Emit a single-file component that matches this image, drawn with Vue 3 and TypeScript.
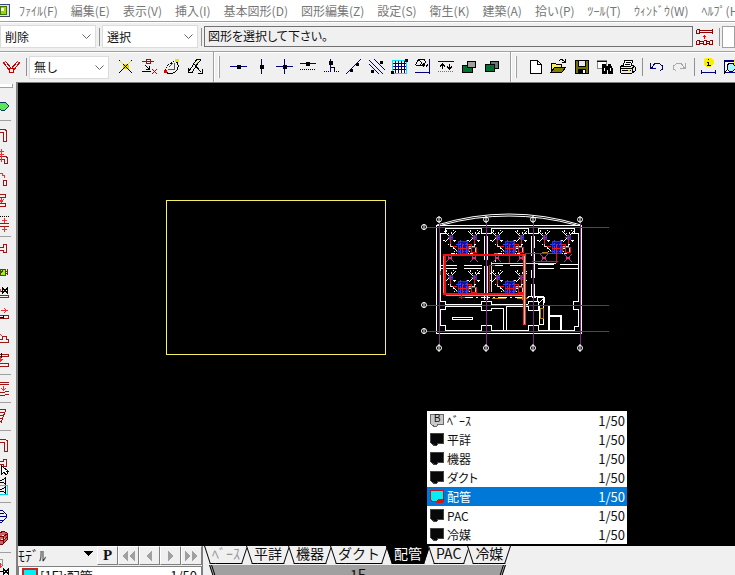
<script setup lang="ts">
import { ref } from 'vue'

type Shape = [d: string, stroke: string, fill?: string, dash?: string]
interface Icon { label: string; shapes: Shape[] }

const K = '#000000'
const R = '#a01414'
const B = '#000080'
const N = 'none'

const menus = [
  'ﾌｧｲﾙ(F)', '編集(E)', '表示(V)', '挿入(I)', '基本図形(D)', '図形編集(Z)', '設定(S)',
  '衛生(K)', '建築(A)', '拾い(P)', 'ﾂｰﾙ(T)', 'ｳｨﾝﾄﾞｳ(W)', 'ﾍﾙﾌﾟ(H)',
]

const branch: Icon = {
  label: '分岐',
  shapes: [
    ['M1.5 4.500L8 13M3.500 3.500L10 11M17.500 4.500L11 13M15.500 3.500L9 11M7.500 10.500H11.500V14.500H7.500Z', '#c00000'],
    ['M1 6L4 3M18 6L15 3', '#ff2020'],
  ],
}

const pipeJoin: Icon = {
  label: '接続',
  shapes: [
    ['M1.5 1.500V5.500M4 2.500H17.500M4 4.500H17.500M1.5 1.500H4V5.500H1.500M17.500 1V6M1.5 12.500V16.500H4.500V12.500H1.500M5 13.500H8M5 15.500H8M8.500 12.500V16.500H11.500V12.500H8.500M12 13.500H14M12 15.500H14M14.500 12.500V16.500H17.500V12.500H14.500', '#900000'],
    ['M9.500 7V11M8 8.500H11', '#ff0000'],
  ],
}

const trimTools: Icon[] = [
  { label: '交点', shapes: [
    ['M3 2L16 15M16 2L3 15', K],
    ['M4 3L7 6H12L15 3', '#f0e000'],
    ['M7 7H12V10H7Z', '#e0d000', '#f0e000'],
    ['M7 6L12 11M12 6L7 11', K],
  ] },
  { label: '端部', shapes: [
    ['M3 3.500H15M7.500 1.500H11.500V5.500H7.500Z', '#c00000'],
    ['M6 7L10 11M10.500 8V11.500H7M3 13.500H12', K],
    ['M13 11L18 16M18 11L13 16', '#c00000'],
  ] },
  { label: '円弧', shapes: [
    ['M3 13L6 7L13 3', K, N, '2 1'],
    ['M14 3Q19 9 13 14Q9 17 3 14', K],
    ['M6 11.500H12.500V5M7 9L11 5', '#555'],
    ['M13 1H16V3H13Z', '#f0e000', '#f0e000'],
    ['M2 12H4V14H2Z', '#e00000', '#e00000'],
  ] },
  { label: '曲線', shapes: [
    ['M16 1.500H12L9 5L7 9L3 14', K],
    ['M3.500 10V14.500H7L13 5L16 2M8 5L16 14M17.500 11V15.500H13', K],
    ['M13 4L10 7', '#f0e000'],
  ] },
]

const snapTools: Icon[] = [
  { label: '水平線', shapes: [['M1 8.5H18', B], ['M8 7H11V10H8Z', K, K]] },
  { label: '垂直線', shapes: [['M9.5 1V16', B], ['M8 7H11V10H8Z', K, K]] },
  { label: '交差', shapes: [['M1 8.5H18M9.5 1V16', B], ['M8 7H11V10H8Z', K, K]] },
  { label: '平行', shapes: [['M2 5.5H18', B], ['M8 4H11V7H8Z', K, K], ['M2 11.5H18', K, N, '1 1']] },
  { label: '直角', shapes: [['M9.5 1V14', B], ['M8 3H11V6H8Z', K, K], ['M10 9.5H13.5V13', K], ['M3 13.5H8M13 13.5H19', K, N, '1 1']] },
  { label: '2点', shapes: [['M2 16L17 1', B], ['M6 11H8V13H6ZM12 5H14V7H12Z', K, K]] },
  { label: '斜線', shapes: [['M2 2L16 16M2 6L12 16M7 1L18 12', B], ['M13 3H15V5H13ZM4 12H6V14H4Z', K, K]] },
  { label: 'グリッド', shapes: [
    ['M2 2H16V15H2Z', '#00e8f8', '#ffffff'],
    ['M3 5.5H16M3 8.5H16M3 11.5H16M5.5 3V15M8.5 3V15M11.5 3V15M14.5 3V15', B],
    ['M15 1H17V3H15ZM1 13H3V15H1Z', K, K],
  ] },
  { label: '面', shapes: [
    ['M2.500 7L5.500 1.500H11L13 4L9 7.500H2.500M6 2L9 5L7 7', K],
    ['M2 14.5H17M16.5 1V16', B],
    ['M10 9L12 6M13 9L15 6', K],
  ] },
  { label: '間隔', shapes: [
    ['M2 3.5H18', B],
    ['M6.5 6V11M4 8.500L6.5 6L9 8.500M13.5 6V11M11 8.500L13.5 11L16 8.500', K],
    ['M2 13.5H18', '#777', N, '1 1'],
  ] },
  { label: '前面', shapes: [['M3 7H13V14H3Z', K, '#007030'], ['M8 3H16V9H8Z', K, '#a0a0a0']] },
  { label: '背面', shapes: [['M8 3H16V10H8Z', K, '#607878'], ['M3 6H12V13H3Z', K, '#007030']] },
]

const fileTools: Icon[] = [
  { label: '新規', shapes: [['M4 2H11L15 6V15H4ZM11 2V6H15', K, '#fff']] },
  { label: '開く', shapes: [
    ['M2 14V5H6L7 6H12V9', K, '#f8f060'],
    ['M2 14L6 9H17L13 14Z', K, '#808000'],
    ['M10 3Q13 0 16 4M16 1V4H13', K],
  ] },
  { label: '保存', shapes: [
    ['M3 2H16V15H3Z', K, '#707000'],
    ['M6 2H13V8H6Z', K, '#e8e8e8'],
    ['M6 11H13V15H6Z', K, K],
    ['M11 12H12V14H11Z', '#fff', '#fff'],
  ] },
  { label: '検索', shapes: [
    ['M2 2H11V10H2Z', '#888', '#fff'],
    ['M2 3H12', B, B],
    ['M7 9L8 6H10V8H13V6H15L17 10V15H13V11H11V15H7Z', K, K],
    ['M9 10V13M15 10V13', '#fff'],
  ] },
  { label: '印刷', shapes: [
    ['M2 9L5 7H15L17 9V13L14 15H3L2 13Z', K, '#e8e8e8'],
    ['M5 8L7 2H15L13 8Z', K, '#fff'],
    ['M8 4H13M7 6H12M3 10H14V14M14 10L17 8M4 12H13', K],
    ['M10 12H12', '#f0d000'],
  ] },
]

const historyTools: Icon[] = [
  { label: '元に戻す', shapes: [['M3.500 5V10.500H9M4 10L8 5.500H12L15.500 8V11L13 13M4 9H6', B]] },
  { label: 'やり直し', shapes: [['M15.500 5V10.500H10M15 10L11 5.500H7L3.500 8V11L6 13M13 9H15', '#a8a8a8']] },
]

const viewTools: Icon[] = [
  { label: '計測', shapes: [
    ['M5 2L7 0H12L14 2V6L12 8H7L5 6Z', '#f8f000', '#f8f000'],
    ['M9.5 1V2M8 4.500H9.5V7M8 7.500H12', K],
    ['M2 14.5H17M2.5 12V16M16.5 12V16', B],
  ] },
  { label: '拡大', shapes: [
    ['M2 2H14V14H2Z', B, '#fff'],
    ['M2 3H14', B],
    ['M5 7L8 5H11L13 8V11L11 13H7L5 11Z', K, '#a8f4ff'],
    ['M5 12L2 16', K],
    ['M12 1H17V7H13Z', '#f8f000', '#f8f000'],
  ] },
]

const sideGroups: Icon[][] = [
  [{ label: '領域', shapes: [['M-3 11L1 7H5L9 11L5 15H1Z', '#0a3a60', '#58e858']] }],
  [
    { label: '配管', shapes: [['M0 6.500H5L6.500 8V18M0 9.500H3.500V18H6.500', R]] },
    { label: '立管', shapes: [['M0 11.500H6L7.500 13V18H4.500V14.500H0', R], ['M1.500 4V17M-1 6.500H4M-1 9.500H4', '#f03030']] },
    { label: '曲管', shapes: [['M0 6H2V8H4V10H5', '#f03030', N], ['M3.500 18.500V13.500H6.500V18.500Z', R]] },
    { label: '継手', shapes: [['M0 5.500H5.500V8.500H0M0 14.500H5.500V17.500H0', R], ['M1.500 9V13M0 11L1.500 13L4 10', '#f03030']] },
    { label: '間隔調整', shapes: [['M0 5.500H9', K, N, '1 1'], ['M0 12.500H9M0 15.500H9', R], ['M4.500 7V12M2 9.500H7M4.500 16V21M2 18.500H7', '#f03030']] },
  ],
  [
    { label: '端末', shapes: [['M0 8.500H3.500V5.500H6.500V13.500H3.500V11.500H0', R]] },
    { label: '弁', shapes: [['M0 8H5V14H0Z', '#2a6000', '#a0f020'], ['M0 13L4 8M7.500 8V14M5 10H7M5 12H7', R]] },
    { label: '弁付管', shapes: [['M2.500 5V10L7.500 5V10ZM0 8H2', K], ['M0 12.500H8.500V14.500H0', R], ['M0 6V9', '#f03030']] },
    { label: '移動', shapes: [['M0 10.500H8.500V13.500H0', R], ['M1 5.500H7M4 3.500L7 5.500L4 7.500', '#f03030'], ['M0 12H4M3 10V14', K]] },
    { label: '勾配', shapes: [['M0 15.500H8.500V12.500H6.500V9.500H2.500V12.500H0', R], ['M0 7L2 9', '#f03030']] },
    { label: '下がり', shapes: [['M0 5.500H8.500V7.500H0M0 14.500H8.500V17.500H0', R], ['M1.500 4V9', K], ['M0 8V11M-2 10L0 13L3 10', '#f03030', '#f03030']] },
  ],
  [{ label: '段差', shapes: [['M0 5.500H9M0 7.500H9M0 15.500H4L6 14.500H9M0 18.500H4L6 17.500H9', R], ['M3.500 9V13M1 11L3.500 13L6 11', '#f03030']] }],
  [{ label: 'ハッチ', shapes: [['M0 4.500H6M0 7.500H5M0 10.500H4M0 13.500H3M0 16.500H2M6 4L1 18', R]] }],
  [
    { label: '竪管', shapes: [['M0 6.500H5L7.500 8V18H4.500V9.500H0', R]] },
    { label: '選択', shapes: [['M0 6.500H3.500V4.500H6V11.500H3V9.500H0', R], ['M1.500 11V19L4 17L6 20L8 18L6 16H8Z', K, '#fff']] },
    { label: '弁選択', shapes: [['M0 3H2L5.500 1V7L2 5H0M0 12H2L5.500 10V16L2 14H0', K], ['M0 8.500H7.500V17.500H0', '#00d8e8']] },
  ],
  [
    { label: '断面', shapes: [['M-2 5H2L6 9V13L2 17H-2M0 11.500H7M0 8H4M0 15H4', B]] },
    { label: '立体', shapes: [['M0 6L3 4L7 6V13L3 17H0M0 9L3 10L7 7M0 13L3 14L7 10M3 10V17', '#800000', '#c46464']] },
  ],
  [{ label: '撤去', shapes: [['M0 4.500H2.500V9H0', '#999'], ['M0 8V12M-2 10L0 13L3 10', '#f03030'], ['M3.500 14V19L8.500 14V19ZM0 16.500H3', K]] }],
]

const layers = [
  { name: 'ﾍﾞｰｽ', base: true },
  { name: '平詳' },
  { name: '機器' },
  { name: 'ダクト' },
  { name: '配管' },
  { name: 'PAC' },
  { name: '冷媒' },
]
const active = ref<string>('配管')

const columnsX = [439, 486, 533, 580]
const rowsY = [227, 305, 331]
const units = [[462, 247], [509, 247], [556, 247], [462, 287], [509, 287]]
const pagers = [
  { label: '先頭', d: 'M9 5V15L3 10ZM16 5V15L10 10Z' },
  { label: '前', d: 'M12 5V15L6 10Z' },
  { label: '次', d: 'M7 5V15L13 10Z' },
  { label: '末尾', d: 'M3 5V15L9 10ZM10 5V15L16 10Z' },
]
const groups = [trimTools, snapTools, fileTools]
</script>

<template>
  <div class="app">
    <nav class="menubar">
      <svg class="logo" width="10" height="17" viewBox="0 0 10 17">
        <path d="M0 2.500H9.500V14.500H0" fill="#d8e8e8" stroke="#447" />
        <path d="M0 4H6V12H0Z" fill="#a4d400" stroke="#3c7800" />
        <path d="M1 6H4V9H1Z" fill="#f8ffd0" />
      </svg>
      <button v-for="m in menus" :key="m" type="button">{{ m }}</button>
    </nav>

    <div class="bar">
      <div class="combo command">
        <select aria-label="コマンド"><option>削除</option></select>
        <svg width="9" height="6" viewBox="0 0 9 6"><path d="M0.500 0.500L4.500 4.500L8.500 0.500" /></svg>
      </div>
      <span class="sep"></span>
      <div class="combo command">
        <select aria-label="方法"><option>選択</option></select>
        <svg width="9" height="6" viewBox="0 0 9 6"><path d="M0.500 0.500L4.500 4.500L8.500 0.500" /></svg>
      </div>
      <span class="sep"></span>
      <output class="prompt">図形を選択して下さい。</output>
      <button class="tool" type="button" :aria-label="pipeJoin.label">
        <svg width="19" height="18" viewBox="0 0 19 18"><path v-for="(p, i) in pipeJoin.shapes" :key="i" :d="p[0]" :stroke="p[1]" fill="none" /></svg>
      </button>
      <span class="sep"></span>
      <input class="edge" type="text" aria-label="数値">
    </div>

    <div class="bar tools">
      <button class="tool" type="button" :aria-label="branch.label">
        <svg width="19" height="18" viewBox="0 0 19 18"><path v-for="(p, i) in branch.shapes" :key="i" :d="p[0]" :stroke="p[1]" fill="none" /></svg>
      </button>
      <span class="sep"></span>
      <div class="combo snap">
        <select aria-label="スナップ"><option>無し</option></select>
        <svg width="9" height="6" viewBox="0 0 9 6"><path d="M0.500 0.500L4.500 4.500L8.500 0.500" /></svg>
      </div>
      <template v-for="(g, gi) in groups" :key="gi">
        <span v-if="gi" class="grip"></span>
        <button v-for="t in g" :key="t.label" class="tool" type="button" :aria-label="t.label">
          <svg width="19" height="18" viewBox="0 0 19 18"><path v-for="(p, i) in t.shapes" :key="i" :d="p[0]" :stroke="p[1]" :fill="p[2] ?? 'none'" :stroke-dasharray="p[3]" /></svg>
        </button>
      </template>
      <template v-for="(g, gi) in [historyTools, viewTools]" :key="'v' + gi">
        <span class="sep"></span>
        <button v-for="t in g" :key="t.label" class="tool" type="button" :aria-label="t.label">
          <svg width="19" height="18" viewBox="0 0 19 18"><path v-for="(p, i) in t.shapes" :key="i" :d="p[0]" :stroke="p[1]" :fill="p[2] ?? 'none'" /></svg>
        </button>
      </template>
    </div>

    <div class="work">
      <aside class="side">
        <div class="side-grip"></div>
        <div v-for="(g, gi) in sideGroups" :key="gi" class="side-group">
          <button v-for="t in g" :key="t.label" type="button" :aria-label="t.label">
            <svg width="16" height="22" viewBox="0 0 16 22"><path v-for="(p, i) in t.shapes" :key="i" :d="p[0]" :stroke="p[1]" :fill="p[2] ?? 'none'" :stroke-dasharray="p[3]" /></svg>
          </button>
        </div>
      </aside>

      <main class="main">
        <div class="canvas">
          <svg class="drawing" width="717" height="463" viewBox="18 83 717 463" fill="none">
            <path d="M166.500 200.500H385.500V354.500H166.500Z" stroke="#f4f060" />

            <g stroke="#fff">
              <path d="M436.500 225.500H581.500V333.500H436.500Z" />
              <path d="M440.500 233.500H445.500V228.500H481.500V233.500H491.500V228.500H528.500V233.500H538.500V228.500H574.500V233.500H578.500V301.500H573.500V309.500H578.500V326.500H574.500V330.500H538.500V325.500H528.500V330.500H491.500V325.500H481.500V330.500H445.500V325.500H440.500V309.500H445.500V301.500H440.500Z" />
              <path class="smooth" d="M437 225Q509 203 581 225M442 225Q509 207 576 225" />
              <path d="M445 304.500H481.500V301.500H491.500V304.500H528M445 306.500H481.500V310.500H491.500V308.500H503.500V330M506.500 330V306.500H528.500V310H538.500V301.500H528.500V304" />
              <path d="M484.500 236V260M484.500 266V300M487.500 236V260M487.500 266V300M531.500 236V256M534.500 236V248M534.500 252V278M534.500 284V296M531.500 270V278M531.500 284V296" />
              <path d="M440 265.500H457M464 265.500H482M440 268.500H457M464 268.500H482M491 265.500H503M510 265.500H525M538 264.500H554M560 264.500H578M538 268.500H554M560 268.500H578" />
              <path d="M452.500 317.500H472.500V319.500H452.500Z" />
              <path d="M539.500 305V324.500H543.500V296.500H528M537 296V302M543 305.500H549.500V330M550 315.500H561.500V330M548.500 306V330M550 316.500H560.500V330" />
              <path d="M538 297H544V303M539 303L543 299" />
              <path d="M464 297.500H536" stroke-dasharray="9 3 2 3" />
            </g>
            <g stroke="#7c2488">
              <path v-for="x in columnsX" :key="x" :d="`M${x}.500 222V345`" />
              <path v-for="y in rowsY" :key="y" :d="`M427 ${y}.500H609`" />
            </g>
            <path d="M491 263.500H528M495 262V258M527 263H556M491.500 262V292" stroke="#f4d8c8" />
            <path d="M492 298.500H506M517 298.500H528M540.500 308H543.500V318H540.500ZM494 253.500H502M542 252.500H548M440.500 271V275M522.500 294V300" stroke="#b08010" />

            <g v-for="(u, i) in units" :key="i" :transform="`translate(${u[0]} ${u[1]})`">
              <path d="M-18-16L-7-5M-6-16L-17-5M6-16L17-5M18-16L7-5" stroke="#fff" />
              <path d="M-16-17L-13-13M-8-17L-11-13M8-17L11-13M16-17L13-13M-19-14H-16M-19-7H-16M-8-7H-5M16-14H19M16-7H19M5-7H8" stroke="#fff" stroke-dasharray="2 1" />
              <path d="M-12-7V-1H-6M12-7V-1H6M13 0V5H9" stroke="#f4b8b8" />
              <path d="M-14-3L-6 3M14-3L6 3M-11 7L-5 3M11 7L5 3M-9 6H-5M5 6H9" stroke="#fff" stroke-dasharray="2 1" />
              <path d="M-13-12H-10V-8H-13ZM11-12H14V-8H11Z" stroke="#1838e0" fill="#2020c0" />
              <path d="M-4-6H5V6H-4Z" stroke="#1830e8" fill="#1010a8" />
              <path d="M-6-3H7M-6 4H7M-2-7V7M4-7V7" stroke="#2848ff" stroke-dasharray="2 1" />
              <path d="M0-3V6M-4 1.500H5M-12-12V-3M12-12V-3M-14-9.500H-9M9-9.500H14M6-1V4M9-3V5H14V0H6M-9-1H-5M5-3H9" stroke="#e81818" />
              <path v-if="u[1] < 260" d="M-16 7L-8 15M-8 7L-16 15M16 7L8 15M8 7L16 15" stroke="#9c38a8" />
              <path v-if="u[1] < 260" d="M-14 11H-10M10 11H14" stroke="#e03070" stroke-width="2" />
            </g>

            <path d="M444.500 254V295M443 254.500H525M443 293.500H525" stroke="#f01010" stroke-width="2" />
            <path d="M524 254V325" stroke="#f03020" stroke-width="3" />
            <path d="M524.500 256V324" stroke="#ffc0b0" />
            <path d="M446 295.500H523M443.500 256V293" stroke="#ff7868" />
            <path d="M525 253.500H556V263M532 261.500H558M489.500 292V265H495M509 253V263M461.500 294V299M459 297.500H465" stroke="#d01818" />

            <g class="smooth" stroke="#fff">
              <g v-for="x in columnsX" :key="x">
                <circle :cx="x" cy="219.500" r="2.500" /><path :d="`M${x} 216V223`" />
                <circle :cx="x" cy="348" r="2.500" /><path :d="`M${x} 344V352`" />
              </g>
              <g v-for="y in rowsY" :key="y">
                <circle cx="424" :cy="y" r="2.500" /><path :d="`M424 ${y - 3}V${y + 3}`" />
              </g>
            </g>
          </svg>

          <ul class="layers">
            <li v-for="l in layers" :key="l.name">
              <button type="button" :class="{ on: l.name === active }" @click="active = l.name">
                <svg width="16" height="15" viewBox="0 0 16 15">
                  <template v-if="l.name === active">
                    <path d="M2.500 1.500H14.500V12.500H3.500L1.500 10.500V1.500Z" stroke="#c01420" fill="#00f0f4" />
                    <path d="M7 14V12L9 10H14V14Z" fill="#e01010" />
                  </template>
                  <path v-else d="M1.500 1.500H14.500V11.500H9L7.500 13.500H5L1.500 10.500Z" :stroke="l.base ? '#666' : '#444'" :fill="l.base ? '#c8c8c8' : '#080808'" />
                </svg>
                <b v-if="l.base">B</b>
                <span>{{ l.name }}</span>
                <em>1/50</em>
              </button>
            </li>
          </ul>
        </div>

        <footer class="bottom">
          <div class="pages">
            <div class="pager">
              <div class="model">
                <select aria-label="空間"><option>ﾓﾃﾞﾙ</option></select>
                <svg width="9" height="5" viewBox="0 0 9 5"><path d="M0 0H9L4.500 5Z" fill="#000" /></svg>
              </div>
              <button class="page p" type="button">P</button>
              <button v-for="p in pagers" :key="p.label" class="page" type="button" :aria-label="p.label">
                <svg width="19" height="19" viewBox="0 0 19 19"><path :d="p.d" fill="#a0a0a0" /></svg>
              </button>
            </div>
            <div class="current">
              <svg width="16" height="12" viewBox="0 0 16 12"><path d="M1 1H15V12H1Z" fill="#00f0f4" stroke="#d02020" stroke-width="2" /></svg>
              <span>[1F]:配管</span><em>1/50</em>
            </div>
          </div>
          <div class="sheets">
            <div class="tabs">
              <button v-for="l in layers" :key="l.name" type="button" :class="{ on: l.name === active, base: l.base }" @click="active = l.name">{{ l.name }}</button>
            </div>
            <button class="floor" type="button">1F</button>
          </div>
        </footer>
      </main>
    </div>
  </div>
</template>

<style>
body { margin: 0; overflow: hidden; background: #f0f0f0; }
</style>

<style scoped>
.app {
  display: flex;
  flex-direction: column;
  height: 100vh;
  overflow: hidden;
  color: #111;
  font: 12px/16px "Noto Sans CJK JP", sans-serif;
}
.app * { box-sizing: border-box; }
button, select, input {
  margin: 0;
  padding: 0;
  border: 0;
  border-radius: 0;
  background: none;
  color: inherit;
  font: inherit;
}
svg { display: block; flex: none; shape-rendering: crispEdges; }
.smooth { shape-rendering: auto; }
em { font-style: normal; }

.menubar {
  display: flex;
  flex: none;
  align-items: center;
  gap: 13px;
  height: 21px;
  background: #fff;
  color: #777;
  white-space: nowrap;
}
.menubar button { flex: none; }
.logo { margin-right: -4px; }

.bar {
  display: flex;
  flex: none;
  align-items: center;
  height: 30px;
  border-top: 1px solid #a0a0a0;
  background: #f0f0f0;
  box-shadow: inset 0 1px #fff;
}
.bar.tools { height: 31px; }
.combo { position: relative; flex: none; height: 23px; }
.combo select {
  width: 100%;
  height: 100%;
  padding-left: 4px;
  appearance: none;
  border: 1px solid #dcdcdc;
  background: #fff;
}
.combo svg { position: absolute; right: 5px; top: 9px; fill: none; stroke: #666; shape-rendering: auto; }
.command { width: 96px; }
.snap { width: 80px; margin-right: 5px; }
.sep { flex: none; width: 6px; height: 18px; background: linear-gradient(#909090, #909090) center / 1px 100% no-repeat; }
.grip {
  flex: none;
  align-self: stretch;
  width: 21px;
  background:
    linear-gradient(#a0a0a0, #a0a0a0) 7px 0 / 1px 100% no-repeat,
    linear-gradient(#fff, #fff) 8px 0 / 1px 100% no-repeat,
    linear-gradient(#a0a0a0, #a0a0a0) 13px 50% / 1px 22px no-repeat,
    linear-gradient(#fff, #fff) 12px 50% / 1px 22px no-repeat;
}
.prompt {
  flex: 1;
  height: 21px;
  padding-left: 3px;
  border: 1px solid #707070;
  line-height: 18px;
  font-feature-settings: "palt";
}
.edge { flex: none; width: 13px; height: 22px; border: 1px solid #a0a0a0; background: #fff; }
.tool { display: flex; flex: none; align-items: center; justify-content: center; width: 23px; height: 24px; }

.work { display: flex; flex: 1; min-height: 0; }
.side { flex: none; width: 16px; overflow: hidden; background: #f0f0f0; }
.side-grip { height: 4px; margin: 2px 3px 7px 0; border: solid #a0a0a0; border-width: 0 1px 1px 0; background: #fff; }
.side-group { padding-bottom: 6px; background: linear-gradient(#a0a0a0, #a0a0a0) 0 calc(100% - 2px) / 11px 1px no-repeat; }
.side-group button { display: block; height: 22px; }

.main {
  display: flex;
  flex: 1;
  flex-direction: column;
  min-width: 0;
  border-left: 2px solid #808080;
}
.canvas { position: relative; flex: 1; min-height: 0; overflow: hidden; border-top: 1px solid #808080; background: #000; }
.layers {
  position: absolute;
  left: 409px;
  bottom: 2px;
  width: 200px;
  margin: 0;
  padding: 0;
  background: #fff;
  list-style: none;
}
.layers button {
  position: relative;
  display: flex;
  align-items: center;
  width: 100%;
  height: 19px;
  padding: 0 2px;
  text-align: left;
}
.layers svg { fill: none; }
.layers b { position: absolute; left: 7px; top: 1px; font: 10px/14px "Liberation Sans", sans-serif; }
.layers span { flex: 1; padding-left: 2px; font-feature-settings: "palt"; }
.layers em { font-size: 13px; }
.layers .on { background: #0078d7; color: #fff; }

.bottom { display: flex; flex: none; height: 29px; overflow: hidden; background: #f0f0f0; }
.pages { flex: none; width: 185px; border-right: 1px solid #808080; }
.pager { display: flex; height: 19px; }
.model { position: relative; flex: 1; }
.model select { display: block; width: 100%; height: 17px; appearance: none; font-size: 14px; line-height: 16px; }
.model svg { position: absolute; right: 4px; top: 5px; }
.page {
  display: flex;
  flex: none;
  align-items: center;
  justify-content: center;
  width: 21px;
  border: 1px solid;
  border-color: #fff #808080 #808080 #fff;
}
.p { font: bold 15px/17px "Liberation Serif", serif; }
.current {
  display: flex;
  height: 22px;
  margin-top: 1px;
  padding: 1px 4px 0 3px;
  border: 1px solid #808080;
  background: #fff;
  font-size: 13px;
  line-height: 16px;
}
.current svg { margin-right: 2px; }
.current span { flex: 1; }

.sheets { flex: none; padding-left: 2px; }
.tabs { display: flex; height: 18px; font-size: 14px; line-height: 14px; }
.tabs button { position: relative; z-index: 0; padding: 0 7px 4px; }
.tabs .base { color: #999; }
.tabs button::before, .tabs button::after {
  position: absolute;
  z-index: -1;
  top: 0;
  bottom: 0;
  border: 0 solid #000;
  border-bottom-width: 1px;
  background: #f0f0f0;
  content: "";
}
.tabs button::before { left: 2px; right: 30%; border-left-width: 1px; transform: skewX(18deg); }
.tabs button::after { left: 30%; right: 2px; border-right-width: 1px; transform: skewX(-18deg); }
.tabs .on { color: #fff; }
.tabs .on::before, .tabs .on::after { background: #000; }
.floor {
  position: relative;
  z-index: 0;
  display: block;
  width: calc(100% - 8px);
  height: 18px;
  margin: 1px 4px;
  font-size: 14px;
  line-height: 14px;
}
.floor::before, .floor::after {
  position: absolute;
  z-index: -1;
  top: 0;
  bottom: 0;
  border: 0 double #000;
  background: #a0a0a0;
  content: "";
}
.floor::before { left: 3px; right: 30%; border-left-width: 3px; transform: skewX(18deg); }
.floor::after { left: 30%; right: 3px; border-right-width: 3px; transform: skewX(-18deg); }
</style>
